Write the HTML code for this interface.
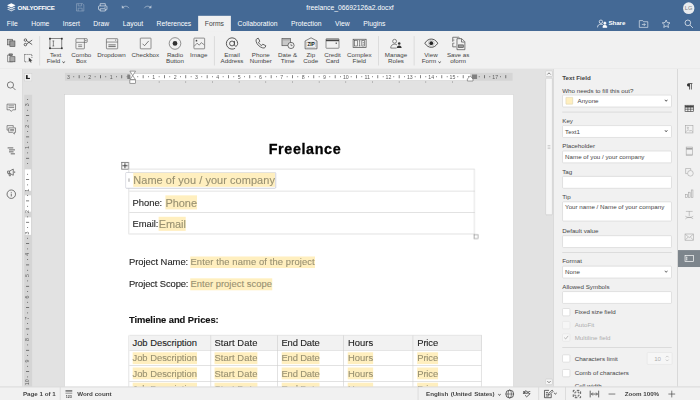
<!DOCTYPE html>
<html lang="en">
<head>
<meta charset="utf-8">
<title>freelance_06692126a2.docxf - ONLYOFFICE</title>
<style>
html,body{margin:0;padding:0;width:700px;height:400px;overflow:hidden;background:#e2e2e2}
#stage{position:absolute;left:0;top:0;width:1240px;height:709px;transform:scale(0.564516);transform-origin:0 0;font-family:"Liberation Sans",Arial,Helvetica,sans-serif;font-size:11px;color:#444;overflow:hidden;background:#e2e2e2}
#stage *{box-sizing:border-box}
.abs{position:absolute}
svg{display:block;overflow:visible}
/* header */
#header{position:absolute;left:0;top:0;width:1240px;height:54.5px;background:#446995;color:#fff}
#logo{position:absolute;left:12px;top:6px;height:16px;white-space:nowrap}
#logo span{position:absolute;left:19.200px;top:1.5px;font-weight:bold;font-size:11px;letter-spacing:-.42px;line-height:13px}
.qa{position:absolute;top:3px;width:20px;height:20px}
#doctitle{position:absolute;left:0;width:1240px;top:0;height:28px;line-height:27px;text-align:center;font-size:12px}
#avatar{position:absolute;left:1209.5px;top:4px;width:20.5px;height:20.5px;border-radius:50%;background:#e9ecef;color:#7b7f86;font-size:10px;line-height:20.5px;text-align:center}
#tabs{position:absolute;left:0;top:27.5px;height:27px;white-space:nowrap;font-size:0}
#tabs span{display:inline-block;height:27px;line-height:28px;padding:0 12px;font-size:12px;color:#fff;vertical-align:top}
#tabs span.act{background:#f1f1f1;color:#444}
.hbtn{position:absolute;top:31.5px;height:20px}
/* toolbar */
#toolbar{position:absolute;left:0;top:54.5px;width:1240px;height:68.5px;z-index:5;background:#f1f1f1;border-bottom:1px solid #cbcbcb}
.tsep{position:absolute;top:9px;width:1px;height:52px;background:#cbcbcb}
.big{position:absolute;top:0;width:0;height:66px}
.big svg{position:absolute;left:-14px;top:8.5px;width:28px;height:28px}
.big .cap{position:absolute;left:-40px;width:80px;top:37px;text-align:center;line-height:11px;font-size:11px;color:#444;white-space:nowrap}
.sm{position:absolute;width:20px;height:20px}
.car{display:inline-block;width:3.5px;height:3.5px;border-right:1px solid #444;border-bottom:1px solid #444;transform:rotate(45deg);margin-left:4px;position:relative;top:-1.5px}
/* left / right bars */
#left{position:absolute;left:0;top:122px;width:40px;height:563px;background:#f1f1f1;border-right:1px solid #cbcbcb}
#left svg{position:absolute;left:9.5px;width:20px;height:20px}
#rbar{position:absolute;left:1200px;top:122px;width:40px;height:563px;background:#f1f1f1;border-left:1px solid #cbcbcb}
#rbar svg{position:absolute;left:10px;width:20px;height:20px}
#rbar .on{position:absolute;left:0;top:320.5px;width:40px;height:30.5px;background:#7d858c}
/* right panel */
#panel{opacity:.99;position:absolute;left:980px;top:122px;width:220px;height:563px;background:#f1f1f1;border-left:1px solid #cbcbcb;overflow:hidden}
#panel .l{position:absolute;left:15px;line-height:13px;height:13px;white-space:nowrap;color:#444}
#panel .in{position:absolute;left:15px;width:194px;height:22px;background:#fff;border:1px solid #cfcfcf;border-radius:2px;line-height:20px;padding-left:4px;white-space:nowrap;color:#444;overflow:hidden}
#panel .sep{position:absolute;left:15px;width:194px;height:1px;background:#cbcbcb}
#panel .cb{position:absolute;left:15px;width:14px;height:14px;background:#fff;border:1px solid #cfcfcf;border-radius:2px}
#panel .cbl{position:absolute;left:37px;line-height:14px;height:14px;white-space:nowrap}
#panel .dis{opacity:.4}
#panel .dd{position:absolute;right:7.500px;top:6px;width:4px;height:4px;border-right:1.4px solid #444;border-bottom:1.4px solid #444;transform:rotate(45deg)}
/* status */
#status{position:absolute;left:0;top:684.5px;width:1240px;height:25px;background:#f1f1f1;border-top:1px solid #cbcbcb;font-weight:bold;color:#444}
#status .t{position:absolute;top:0;line-height:24px;white-space:nowrap}
#status .sw{position:absolute;left:0;top:0;width:1240px;height:24px;filter:grayscale(1)}
#status svg{position:absolute;top:2px;width:20px;height:20px}
#status .vs{position:absolute;top:0;width:1px;height:24px;background:#cbcbcb}
/* editor */
#editor{position:absolute;left:40px;top:122px;width:940px;height:563px;background:#e2e2e2;overflow:hidden}
#page{position:absolute;left:75px;top:46.5px;width:795px;height:600px;background:#fff;border:1px solid #bfbfbf}
#doc{font-family:"Liberation Sans",Arial,sans-serif;color:#222}
#doc .tx{position:absolute;white-space:nowrap;line-height:1;-webkit-text-stroke:.2px}
.pht{color:#989070}
#vscroll{position:absolute;left:926.5px;top:0;width:12px;height:563px}
</style>
</head>
<body>
<div id="stage">
<div id="header">
  <div id="logo">
    <svg width="16" height="17" viewBox="0 0 16 17" style="position:absolute;left:0;top:-1px">
      <path d="M8 .8 L15.5 4.5 L8 8.200 L.5 4.5 Z" fill="#fff"/>
      <path d="M.5 8 L2.800 6.900 L8 9.5 L13.200 6.900 L15.5 8 L8 11.700 Z" fill="#fff" opacity=".85"/>
      <path d="M.5 11.5 L2.800 10.400 L8 13 L13.200 10.400 L15.5 11.5 L8 15.200 Z" fill="#fff" opacity=".7"/>
    </svg>
    <span>ONLYOFFICE</span>
  </div>
  <svg class="qa" style="left:131.5px;opacity:.45" viewBox="0 0 20 20" fill="none" stroke="#fff" stroke-width="1"><path d="M3.5 3.5h11l2 2v11h-13z"/><path d="M6.5 3.5v4h6v-4M6.5 16.5v-5h7v5"/></svg>
  <svg class="qa" style="left:171.5px" viewBox="0 0 20 20" fill="none" stroke="#fff" stroke-width="1"><path d="M5.5 7.5v-4h9v4"/><rect x="2.5" y="7.5" width="15" height="7" rx="1.5"/><path d="M5.5 12.5h9v4h-9z" fill="#446995"/><path d="M13 10h2" /></svg>
  <svg class="qa" style="left:211.5px;opacity:.6" viewBox="0 0 20 20" fill="none" stroke="#fff" stroke-width="1.3"><path d="M5 10.500c3.500-3.500 8.500-3.500 11.500 1"/><path d="M3.800 6.500v5h5z" fill="#fff" stroke="none"/></svg>
  <svg class="qa" style="left:251.5px;opacity:.6" viewBox="0 0 20 20" fill="none" stroke="#fff" stroke-width="1.3"><path d="M15 10.500c-3.500-3.500-8.500-3.500-11.500 1"/><path d="M16.200 6.500v5h-5z" fill="#fff" stroke="none"/></svg>
  <div id="doctitle">freelance_06692126a2.docxf</div>
  <div id="avatar">LG</div>
  <div id="tabs"><span>File</span><span>Home</span><span>Insert</span><span>Draw</span><span>Layout</span><span>References</span><span class="act">Forms</span><span>Collaboration</span><span>Protection</span><span>View</span><span>Plugins</span></div>
  <svg class="hbtn" style="left:1056.5px;width:20px" viewBox="0 0 20 20" fill="none" stroke="#fff" stroke-width="1.2"><circle cx="7.5" cy="6.5" r="3"/><path d="M1.5 16.5c0-4 2.5-5.5 6-5.5s4 1 5 2.5"/><circle cx="14.5" cy="9" r="2" fill="#fff"/><path d="M11 16.5c0-2.5 1.5-4 3.5-4s3.5 1.5 3.5 4z" fill="#fff"/></svg>
  <div class="hbtn" style="left:1078px;line-height:19px;font-size:11px;font-weight:bold;color:#fff;letter-spacing:-.2px">Share</div>
  <svg class="hbtn" style="left:1130px;width:20px" viewBox="0 0 20 20" fill="none" stroke="#fff" stroke-width="1"><path d="M2.5 4.5h6l1.5 2h7.5v10h-15z"/><path d="M7 11.5h6M10.5 9l2.5 2.5-2.5 2.5"/></svg>
  <svg class="hbtn" style="left:1170px;width:20px" viewBox="0 0 20 20" fill="none" stroke="#fff" stroke-width="1.1"><path d="M10 3.500l2 4.500 4.800.5-3.600 3.300 1 4.800-4.200-2.500-4.200 2.500 1-4.800-3.600-3.300 4.800-.5z"/></svg>
  <svg class="hbtn" style="left:1210px;width:20px" viewBox="0 0 20 20" fill="none" stroke="#fff" stroke-width="1.2"><circle cx="8.5" cy="8.5" r="5"/><path d="M12.5 12.5l5 5"/></svg>
</div>
<div id="toolbar">
  <svg class="sm" style="left:10px;top:11px" viewBox="0 0 20 20" fill="none" stroke="#444" stroke-width="1"><rect x="3.5" y="3.5" width="9" height="10" fill="#bdbdbd"/><rect x="7.5" y="6.5" width="9" height="10" fill="#9a9a9a"/></svg>
  <svg class="sm" style="left:40px;top:10.5px" viewBox="0 0 20 20" fill="none" stroke="#333" stroke-width="1.3"><circle cx="5" cy="6" r="2.2"/><circle cx="5" cy="14" r="2.2"/><path d="M7 7l10 7M7 13l10-7"/></svg>
  <svg class="sm" style="left:10px;top:38px" viewBox="0 0 20 20" fill="none" stroke="#444" stroke-width="1"><path d="M6.5 4.5h-3v12h9v-3"/><rect x="6" y="2.5" width="6" height="3" fill="#888"/><rect x="7.5" y="7.5" width="9" height="9" fill="#aaa"/></svg>
  <svg class="sm" style="left:40px;top:38px" viewBox="0 0 20 20" fill="none" stroke="#333" stroke-width="1.2"><path d="M3.5 3.5h13v6M3.5 3.5v13h5" stroke-dasharray="2 1.5"/><path d="M11 9v8l2-2 1.500 3 1.500-.8-1.500-2.800h3z" fill="#444" stroke="none"/></svg>
  <div class="tsep" style="left:70px"></div>
  <div class="tsep" style="left:379px"></div>
  <div class="tsep" style="left:670px"></div>
  <div class="tsep" style="left:733px"></div>

  <div class="big" style="left:98.5px"><svg viewBox="0 0 28 28" fill="none" stroke="#444" stroke-width="1.1"><rect x="3.5" y="5.5" width="21" height="17"/><path d="M9.5 9.500v9M8 9.500h3M8 18.500h3"/><rect x="2" y="4" width="3" height="3" fill="#333" stroke="none"/><rect x="23" y="4" width="3" height="3" fill="#333" stroke="none"/><rect x="2" y="21" width="3" height="3" fill="#333" stroke="none"/><rect x="23" y="21" width="3" height="3" fill="#333" stroke="none"/></svg><div class="cap">Text<br>Field<i class="car"></i></div></div>
  <div class="big" style="left:144px"><svg viewBox="0 0 28 28" fill="none" stroke="#444" stroke-width="1"><rect x="4.5" y="5.5" width="20" height="6.5" rx="1"/><path d="M19.500 5.500v6.500"/><path d="M20.700 8h2.800l-1.400 1.800z" fill="#444" stroke="none"/><path d="M4.500 12v10.500a1 1 0 0 0 1 1h13a1 1 0 0 0 1-1v-10.500"/><path d="M8.500 16.500h7M8.500 19.500h7"/></svg><div class="cap">Combo<br>Box</div></div>
  <div class="big" style="left:197.5px"><svg viewBox="0 0 28 28" fill="none" stroke="#444" stroke-width="1"><rect x="4.5" y="5.5" width="20" height="18" rx="1"/><path d="M4.500 11.500h20"/><path d="M19.600 7.500h2.800l-1.400 1.800z" fill="#444" stroke="none"/><path d="M8 16.500h13M8 19.500h13" stroke-width="1.300"/></svg><div class="cap">Dropdown</div></div>
  <div class="big" style="left:258.2px"><svg viewBox="0 0 28 28" fill="none" stroke="#444" stroke-width="1"><rect x="4.5" y="4.500" width="19" height="19" rx="1"/><path d="M8.500 14.500l3.500 3.500 7.500-8.500" stroke-width="1.200"/></svg><div class="cap" style="left:-40.700px">Checkbox</div></div>
  <div class="big" style="left:310px"><svg viewBox="0 0 28 28" fill="none" stroke="#444" stroke-width="1"><circle cx="14" cy="14" r="10.300"/><circle cx="14" cy="14" r="4.200" fill="#333" stroke="none"/></svg><div class="cap">Radio<br>Button</div></div>
  <div class="big" style="left:352.5px"><svg viewBox="0 0 28 28" fill="none" stroke="#444" stroke-width="1"><rect x="4.5" y="4.500" width="19" height="19" rx="1"/><circle cx="9" cy="9" r="1.500" fill="#444" stroke="none"/><path d="M5 19l5-5.500 4 3.500 3.500-4.500 5.500 4"/></svg><div class="cap" style="left:-40.500px">Image</div></div>

  <div class="big" style="left:411px"><svg viewBox="0 0 28 28" fill="none" stroke="#3c3c3c" stroke-width="1.5"><circle cx="14" cy="14" r="4.300"/><path d="M18.300 9.500v6.500c0 1.800 1 2.800 2.400 2.800s3.300-1.500 3.300-4.800c0-5.500-4.500-10-10-10s-10 4.500-10 10 4.500 10 10 10c2 0 4-.5 5.500-1.500"/></svg><div class="cap">Email<br>Address</div></div>
  <div class="big" style="left:462px"><svg viewBox="0 0 28 28" fill="none" stroke="#3c3c3c" stroke-width="1.600"><g transform="translate(14 14) scale(.88) translate(-14.500 -14)"><path d="M6.500 4.500l3-1 3 6-2.500 2c1 3 3.500 5.500 6.500 6.500l2-2.500 6 3-1 3c-1 1.500-3 2-5 1.500c-7-2-12-7-13.500-13.500c-.5-2 0-4 1.500-5z"/></g></svg><div class="cap">Phone<br>Number</div></div>
  <div class="big" style="left:509.5px"><svg viewBox="0 0 28 28" fill="none" stroke="#444" stroke-width="1.100"><rect x="3.500" y="5.500" width="15" height="12.500" fill="#c9c9c9"/><path d="M4 7.500h14" stroke-width="1.500" stroke="#999"/><circle cx="19.500" cy="17.500" r="5.500" fill="#f1f1f1" stroke-width="1.300"/><path d="M19.500 14.500v3.300h2.700"/></svg><div class="cap">Date &amp;<br>Time</div></div>
  <div class="big" style="left:550.5px"><svg viewBox="0 0 28 28" fill="none" stroke="#444" stroke-width="1.200"><path d="M3.500 9.500l10.500-5.500 10.500 5.500v14h-21z"/><rect x="6" y="11.500" width="16" height="9" stroke-width=".5" stroke="#888"/><text x="14" y="19.200" font-family="Liberation Sans,Arial,sans-serif" font-size="8.500" font-weight="bold" text-anchor="middle" fill="#222" stroke="none" letter-spacing="-.3">ZIP</text></svg><div class="cap">Zip<br>Code</div></div>
  <div class="big" style="left:589px"><svg viewBox="0 0 28 28" fill="none" stroke="#444" stroke-width="1"><rect x="2.500" y="5.500" width="23" height="17" rx="1"/><path d="M2.500 8.500h23" stroke-width="3"/><path d="M19.500 13.500h2.500" stroke-width="2"/></svg><div class="cap">Credit<br>Card</div></div>
  <div class="big" style="left:636.5px"><svg viewBox="0 0 28 28" fill="none" stroke="#444" stroke-width="1.200"><rect x="2.500" y="6.500" width="23" height="14.500"/><rect x="5" y="9" width="5" height="9.500" stroke-width="1"/><rect x="18" y="9" width="5" height="9.500" stroke-width="1"/><path d="M14 9v9.500M12.500 9h3M12.500 18.500h3" stroke-width="1"/><path d="M20.500 11.500v1.500M20.500 14.500v1.500"/></svg><div class="cap">Complex<br>Field</div></div>
  <div class="big" style="left:701.5px"><svg viewBox="0 0 28 28" fill="none" stroke="#444" stroke-width="1.300"><g transform="translate(14 14) scale(.86) translate(-14 -13)"><circle cx="10.500" cy="8.500" r="4"/><path d="M2.500 22.500c0-5.500 3.500-8 8-8 2 0 3.500.5 5 1.500"/><circle cx="20" cy="13" r="2.700" fill="#333" stroke="none"/><path d="M15 22.500c0-3.500 2-5.500 5-5.500s5 2 5 5.500z" fill="#333" stroke="none"/><path d="M2.500 22.500h12"/></g></svg><div class="cap">Manage<br>Roles</div></div>
  <div class="big" style="left:763.5px"><svg viewBox="0 0 28 28" fill="none" stroke="#3a3a3a" stroke-width="1.5"><path d="M2.500 13.500C6 8 10 6.200 14 6.200S22 8 25.500 13.500C22 19 18 20.800 14 20.800S6 19 2.500 13.500z"/><circle cx="14" cy="13.500" r="5.200" stroke-width=".7" stroke="#888"/><circle cx="14" cy="13.500" r="3.300" fill="#222" stroke="none"/></svg><div class="cap">View<br>Form<i class="car"></i></div></div>
  <div class="big" style="left:811.5px"><svg viewBox="0 0 28 28" fill="none" stroke="#444" stroke-width="1.200"><path d="M10 20h-6v-6.500M4 11v-8h10.500l3 3" /><path d="M7 8h-3M7 13.500h-3" stroke-width="1"/><path d="M11.500 5.500h8.500l5.500 5.500v14h-14z" fill="#f1f1f1"/><path d="M19.500 6v5.500h5.500"/><rect x="14" y="16.500" width="9" height="5" fill="#999" stroke-width="1"/></svg><div class="cap">Save as<br>oform</div></div>
</div>
<div id="left">
  <svg style="top:20px" viewBox="0 0 20 20" fill="none" stroke="#444" stroke-width="1.200"><circle cx="8.5" cy="8.5" r="5.5"/><path d="M12.5 12.5l5 5"/></svg>
  <svg style="top:58.5px" viewBox="0 0 20 20" fill="none" stroke="#444" stroke-width="1"><path d="M2.5 3.5h15v10h-5l-2.5 3-2.5-3h-5z"/><path d="M5 6.5h10M5 9.5h10" /></svg>
  <svg style="top:98px" viewBox="0 0 20 20" fill="none" stroke="#444" stroke-width="1"><path d="M2.5 2.5h11v3M2.5 2.5v8h3"/><path d="M5.5 6.5h12v8h-2v3l-3-3h-7z"/><path d="M8 9.5h7M8 11.5h7"/></svg>
  <svg style="top:134.5px" viewBox="0 0 20 20" fill="none" stroke="#444" stroke-width="1.4"><path d="M3.5 5h10M6 8.5h10.500M6 12h8M9 15.500h7.500"/></svg>
  <svg style="top:172.5px" viewBox="0 0 20 20" fill="none" stroke="#444" stroke-width="1.2"><path d="M3.500 8h3.500l6.500-3.500v11l-6.500-3.500h-3.500z"/><path d="M5.500 12l1 4.500h2l-1-4.500M16 8.500v3"/><path d="M7 8v4"/></svg>
  <svg style="top:212px" viewBox="0 0 20 20" fill="none" stroke="#444" stroke-width="1.3"><circle cx="10" cy="10" r="7.5"/><path d="M10 9v5M10 6v1.5"/></svg>
</div>
<div id="editor"><div class="abs" id="ed0" style="left:-40px;top:-122px;width:1240px;height:709px">
<div class="abs" style="left:114px;top:167px;width:796px;height:553px;background:#fff;border:1px solid #cdcdcd"></div>
<div id="doc" style="opacity:.99"><div class="tx " style="left:476.07px;top:251.51px;font-size:25.38px;letter-spacing:1.1px;font-weight:bold;color:#000;-webkit-text-stroke:.55px #000;">Freelance</div>
<div class="abs" style="left:228.51px;top:299.4px;width:612.03px;height:1px;background:#cccccc"></div>
<div class="abs" style="left:228.51px;top:338.29px;width:612.03px;height:1px;background:#cccccc"></div>
<div class="abs" style="left:228.51px;top:376.11px;width:612.03px;height:1px;background:#cccccc"></div>
<div class="abs" style="left:228.51px;top:414.46px;width:612.03px;height:1px;background:#cccccc"></div>
<div class="abs" style="left:228.01px;top:299.9px;width:1px;height:115.05px;background:#cccccc"></div>
<div class="abs" style="left:840.04px;top:299.9px;width:1px;height:115.05px;background:#cccccc"></div>
<svg class="abs" style="left:214.87px;top:286.79px" width="13" height="13" viewBox="0 0 13 13" fill="#fff" stroke="#555" stroke-width="1.2"><rect x=".5" y=".5" width="12" height="12"/><path d="M6.500 2v9M2 6.500h9" stroke-width="2" stroke="#444"/></svg>
<div class="abs" style="left:839.3px;top:415.22px;width:7.44px;height:7.44px;background:#fff;border:1px solid #777"></div>
<div class="abs" style="left:222.31px;top:305.39px;width:266.78px;height:29.05px;background:#fff;border:1px solid #adb1bf;border-radius:2px"></div>
<div class="abs" style="left:227.27px;top:315.67px;width:2.83px;height:5.85px;background:#c8c8c8"></div>
<div class="abs" style="left:236.13px;top:306.11px;width:251.01px;height:25.07px;background:#ffefbf"></div><div class="tx pht" style="left:236.13px;top:309.82px;font-size:19.42px;letter-spacing:0.11px;">Name of you / your company</div>
<div class="tx " style="left:234.89px;top:352.26px;font-size:16.64px;letter-spacing:-0.05px;">Phone:</div>
<div class="abs" style="left:293.17px;top:346.21px;width:55.8px;height:25.07px;background:#ffefbf"></div><div class="tx pht" style="left:293.17px;top:349.91px;font-size:19.42px;letter-spacing:-0.07px;">Phone</div>
<div class="tx " style="left:234.89px;top:390.35px;font-size:16.64px;letter-spacing:-0.12px;">Email:</div>
<div class="abs" style="left:281.21px;top:384.29px;width:47.83px;height:25.07px;background:#ffefbf"></div><div class="tx pht" style="left:281.21px;top:388px;font-size:19.42px;letter-spacing:-0.14px;">Email</div>
<div class="tx " style="left:228.34px;top:457.13px;font-size:16.64px;letter-spacing:-0.02px;">Project Name:</div>
<div class="abs" style="left:337.46px;top:453.93px;width:220.54px;height:21.43px;background:#ffefbf"></div><div class="tx pht" style="left:337.46px;top:457.13px;font-size:16.64px;letter-spacing:0.2px;">Enter the name of the project</div>
<div class="tx " style="left:228.34px;top:496.1px;font-size:16.64px;letter-spacing:-0.2px;">Project Scope:</div>
<div class="abs" style="left:337.46px;top:492.9px;width:144.37px;height:21.43px;background:#ffefbf"></div><div class="tx pht" style="left:337.46px;top:496.1px;font-size:16.64px;letter-spacing:0.05px;">Enter project scope</div>
<div class="tx " style="left:228.34px;top:558.99px;font-size:16.64px;letter-spacing:-0.12px;font-weight:bold;color:#111;-webkit-text-stroke:.25px #111;">Timeline and Prices:</div>
<div class="abs" style="left:228.51px;top:593.87px;width:624.43px;height:27.01px;background:#f2f2f2"></div>
<div class="abs" style="left:228.51px;top:593.37px;width:624.43px;height:1px;background:#cccccc"></div>
<div class="abs" style="left:228.51px;top:620.39px;width:624.43px;height:1px;background:#cccccc"></div>
<div class="abs" style="left:228.51px;top:647.4px;width:624.43px;height:1px;background:#cccccc"></div>
<div class="abs" style="left:228.51px;top:675.12px;width:624.43px;height:1px;background:#cccccc"></div>
<div class="abs" style="left:228.51px;top:702.76px;width:624.43px;height:1px;background:#cccccc"></div>
<div class="abs" style="left:228.01px;top:593.87px;width:1px;height:109.39px;background:#cccccc"></div>
<div class="abs" style="left:373.09px;top:593.87px;width:1px;height:109.39px;background:#cccccc"></div>
<div class="abs" style="left:491.07px;top:593.87px;width:1px;height:109.39px;background:#cccccc"></div>
<div class="abs" style="left:607.81px;top:593.87px;width:1px;height:109.39px;background:#cccccc"></div>
<div class="abs" style="left:730.57px;top:593.87px;width:1px;height:109.39px;background:#cccccc"></div>
<div class="abs" style="left:852.44px;top:593.87px;width:1px;height:109.39px;background:#cccccc"></div>
<div class="tx " style="left:234.71px;top:600.17px;font-size:16.64px;letter-spacing:-0.03px;">Job Description</div>
<div class="tx " style="left:379.97px;top:600.17px;font-size:16.64px;letter-spacing:0.13px;">Start Date</div>
<div class="tx " style="left:498.66px;top:600.17px;font-size:16.64px;letter-spacing:-0.26px;">End Date</div>
<div class="tx " style="left:616.46px;top:600.17px;font-size:16.64px;letter-spacing:0.07px;">Hours</div>
<div class="tx " style="left:739.13px;top:600.17px;font-size:16.64px;letter-spacing:-0.23px;">Price</div>
<div class="abs" style="left:234.71px;top:623.99px;width:114.26px;height:21.43px;background:#ffefbf"></div><div class="tx pht" style="left:234.71px;top:627.19px;font-size:16.64px;letter-spacing:-0.03px;">Job Description</div>
<div class="abs" style="left:379.97px;top:623.99px;width:76.17px;height:21.43px;background:#ffefbf"></div><div class="tx pht" style="left:379.97px;top:627.19px;font-size:16.64px;letter-spacing:0.13px;">Start Date</div>
<div class="abs" style="left:498.66px;top:623.99px;width:67.31px;height:21.43px;background:#ffefbf"></div><div class="tx pht" style="left:498.66px;top:627.19px;font-size:16.64px;letter-spacing:-0.26px;">End Date</div>
<div class="abs" style="left:616.46px;top:623.99px;width:44.73px;height:21.43px;background:#ffefbf"></div><div class="tx pht" style="left:616.46px;top:627.19px;font-size:16.64px;letter-spacing:0.07px;">Hours</div>
<div class="abs" style="left:739.13px;top:623.99px;width:36.76px;height:21.43px;background:#ffefbf"></div><div class="tx pht" style="left:739.13px;top:627.19px;font-size:16.64px;letter-spacing:-0.23px;">Price</div>
<div class="abs" style="left:234.71px;top:651px;width:114.26px;height:21.43px;background:#ffefbf"></div><div class="tx pht" style="left:234.71px;top:654.2px;font-size:16.64px;letter-spacing:-0.03px;">Job Description</div>
<div class="abs" style="left:379.97px;top:651px;width:76.17px;height:21.43px;background:#ffefbf"></div><div class="tx pht" style="left:379.97px;top:654.2px;font-size:16.64px;letter-spacing:0.13px;">Start Date</div>
<div class="abs" style="left:498.66px;top:651px;width:67.31px;height:21.43px;background:#ffefbf"></div><div class="tx pht" style="left:498.66px;top:654.2px;font-size:16.64px;letter-spacing:-0.26px;">End Date</div>
<div class="abs" style="left:616.46px;top:651px;width:44.73px;height:21.43px;background:#ffefbf"></div><div class="tx pht" style="left:616.46px;top:654.2px;font-size:16.64px;letter-spacing:0.07px;">Hours</div>
<div class="abs" style="left:739.13px;top:651px;width:36.76px;height:21.43px;background:#ffefbf"></div><div class="tx pht" style="left:739.13px;top:654.2px;font-size:16.64px;letter-spacing:-0.23px;">Price</div>
<div class="abs" style="left:234.71px;top:678.19px;width:114.26px;height:21.43px;background:#ffefbf"></div><div class="tx pht" style="left:234.71px;top:681.39px;font-size:16.64px;letter-spacing:-0.03px;">Job Description</div>
<div class="abs" style="left:379.97px;top:678.19px;width:76.17px;height:21.43px;background:#ffefbf"></div><div class="tx pht" style="left:379.97px;top:681.39px;font-size:16.64px;letter-spacing:0.13px;">Start Date</div>
<div class="abs" style="left:498.66px;top:678.19px;width:67.31px;height:21.43px;background:#ffefbf"></div><div class="tx pht" style="left:498.66px;top:681.39px;font-size:16.64px;letter-spacing:-0.26px;">End Date</div>
<div class="abs" style="left:616.46px;top:678.19px;width:44.73px;height:21.43px;background:#ffefbf"></div><div class="tx pht" style="left:616.46px;top:681.39px;font-size:16.64px;letter-spacing:0.07px;">Hours</div>
<div class="abs" style="left:739.13px;top:678.19px;width:36.76px;height:21.43px;background:#ffefbf"></div><div class="tx pht" style="left:739.13px;top:681.39px;font-size:16.64px;letter-spacing:-0.23px;">Price</div></div>
<div class="abs" style="left:115.14px;top:128.96px;width:792.89px;height:13.82px;background:#d5d5d5"></div>
<div class="abs" style="left:228.51px;top:130.55px;width:604.77px;height:11.34px;background:#fff"></div>
<div class="abs" style="left:43.05px;top:168.29px;width:13.46px;height:540.71px;background:#d5d5d5"></div>
<div class="abs" style="left:44.11px;top:299.9px;width:10.98px;height:38.26px;background:#fff"></div>
<div class="abs" style="left:44.11px;top:346.14px;width:10.98px;height:29.23px;background:#fff"></div>
<div class="abs" style="left:44.11px;top:384.58px;width:10.98px;height:31px;background:#fff"></div>
<div class="abs" style="left:42.87px;top:129.67px;width:13.82px;height:14.53px;background:#f1f1f1;border:1px solid #cfcfcf"></div>
<div class="abs" style="left:45.88px;top:133.21px;width:2.66px;height:7.26px;background:#222"></div>
<div class="abs" style="left:45.88px;top:137.82px;width:7.62px;height:2.66px;background:#222"></div>
<svg class="abs" style="left:0;top:0;opacity:.99" width="1240" height="709" viewBox="0 0 1240 709" font-family="Liberation Sans,Arial,sans-serif" font-size="9.300" fill="#5c5c5c" text-anchor="middle">
<text x="121.24" y="139.17">3</text>
<rect x="130.09" y="134.97" width="1.200" height="1.800" fill="#444"/>
<rect x="139.54" y="133.12" width="1.200" height="5.500" fill="#444"/>
<rect x="148.99" y="134.97" width="1.200" height="1.800" fill="#444"/>
<text x="159.04" y="139.17">2</text>
<rect x="167.88" y="134.97" width="1.200" height="1.800" fill="#444"/>
<rect x="177.33" y="133.12" width="1.200" height="5.500" fill="#444"/>
<rect x="186.78" y="134.97" width="1.200" height="1.800" fill="#444"/>
<text x="196.83" y="139.17">1</text>
<rect x="205.68" y="134.97" width="1.200" height="1.800" fill="#444"/>
<rect x="215.13" y="133.12" width="1.200" height="5.500" fill="#444"/>
<rect x="224.58" y="134.97" width="1.200" height="1.800" fill="#444"/>
<rect x="243.47" y="134.97" width="1.200" height="1.800" fill="#444"/>
<rect x="252.92" y="133.12" width="1.200" height="5.500" fill="#444"/>
<rect x="262.37" y="134.97" width="1.200" height="1.800" fill="#444"/>
<text x="272.42" y="139.17">1</text>
<rect x="281.27" y="134.97" width="1.200" height="1.800" fill="#444"/>
<rect x="290.72" y="133.12" width="1.200" height="5.500" fill="#444"/>
<rect x="300.17" y="134.97" width="1.200" height="1.800" fill="#444"/>
<text x="310.22" y="139.17">2</text>
<rect x="319.06" y="134.97" width="1.200" height="1.800" fill="#444"/>
<rect x="328.51" y="133.12" width="1.200" height="5.500" fill="#444"/>
<rect x="337.96" y="134.97" width="1.200" height="1.800" fill="#444"/>
<text x="348.01" y="139.17">3</text>
<rect x="356.86" y="134.97" width="1.200" height="1.800" fill="#444"/>
<rect x="366.31" y="133.12" width="1.200" height="5.500" fill="#444"/>
<rect x="375.76" y="134.97" width="1.200" height="1.800" fill="#444"/>
<text x="385.81" y="139.17">4</text>
<rect x="394.65" y="134.97" width="1.200" height="1.800" fill="#444"/>
<rect x="404.1" y="133.12" width="1.200" height="5.500" fill="#444"/>
<rect x="413.55" y="134.97" width="1.200" height="1.800" fill="#444"/>
<text x="423.6" y="139.17">5</text>
<rect x="432.45" y="134.97" width="1.200" height="1.800" fill="#444"/>
<rect x="441.9" y="133.12" width="1.200" height="5.500" fill="#444"/>
<rect x="451.35" y="134.97" width="1.200" height="1.800" fill="#444"/>
<text x="461.4" y="139.17">6</text>
<rect x="470.24" y="134.97" width="1.200" height="1.800" fill="#444"/>
<rect x="479.69" y="133.12" width="1.200" height="5.500" fill="#444"/>
<rect x="489.14" y="134.97" width="1.200" height="1.800" fill="#444"/>
<text x="499.19" y="139.17">7</text>
<rect x="508.04" y="134.97" width="1.200" height="1.800" fill="#444"/>
<rect x="517.49" y="133.12" width="1.200" height="5.500" fill="#444"/>
<rect x="526.94" y="134.97" width="1.200" height="1.800" fill="#444"/>
<text x="536.99" y="139.17">8</text>
<rect x="545.83" y="134.97" width="1.200" height="1.800" fill="#444"/>
<rect x="555.28" y="133.12" width="1.200" height="5.500" fill="#444"/>
<rect x="564.73" y="134.97" width="1.200" height="1.800" fill="#444"/>
<text x="574.78" y="139.17">9</text>
<rect x="583.63" y="134.97" width="1.200" height="1.800" fill="#444"/>
<rect x="593.08" y="133.12" width="1.200" height="5.500" fill="#444"/>
<rect x="602.53" y="134.97" width="1.200" height="1.800" fill="#444"/>
<text x="612.58" y="139.17">10</text>
<rect x="621.42" y="134.97" width="1.200" height="1.800" fill="#444"/>
<rect x="630.87" y="133.12" width="1.200" height="5.500" fill="#444"/>
<rect x="640.32" y="134.97" width="1.200" height="1.800" fill="#444"/>
<text x="650.37" y="139.17">11</text>
<rect x="659.22" y="134.97" width="1.200" height="1.800" fill="#444"/>
<rect x="668.67" y="133.12" width="1.200" height="5.500" fill="#444"/>
<rect x="678.12" y="134.97" width="1.200" height="1.800" fill="#444"/>
<text x="688.17" y="139.17">12</text>
<rect x="697.01" y="134.97" width="1.200" height="1.800" fill="#444"/>
<rect x="706.46" y="133.12" width="1.200" height="5.500" fill="#444"/>
<rect x="715.91" y="134.97" width="1.200" height="1.800" fill="#444"/>
<text x="725.96" y="139.17">13</text>
<rect x="734.81" y="134.97" width="1.200" height="1.800" fill="#444"/>
<rect x="744.26" y="133.12" width="1.200" height="5.500" fill="#444"/>
<rect x="753.71" y="134.97" width="1.200" height="1.800" fill="#444"/>
<text x="763.76" y="139.17">14</text>
<rect x="772.6" y="134.97" width="1.200" height="1.800" fill="#444"/>
<rect x="782.05" y="133.12" width="1.200" height="5.500" fill="#444"/>
<rect x="791.5" y="134.97" width="1.200" height="1.800" fill="#444"/>
<text x="801.55" y="139.17">15</text>
<rect x="810.4" y="134.97" width="1.200" height="1.800" fill="#444"/>
<rect x="819.85" y="133.12" width="1.200" height="5.500" fill="#444"/>
<rect x="829.3" y="134.97" width="1.200" height="1.800" fill="#444"/>
<rect x="848.19" y="134.97" width="1.200" height="1.800" fill="#444"/>
<rect x="857.64" y="133.12" width="1.200" height="5.500" fill="#444"/>
<rect x="867.09" y="134.97" width="1.200" height="1.800" fill="#444"/>
<text x="877.14" y="139.17">17</text>
<rect x="885.99" y="134.97" width="1.200" height="1.800" fill="#444"/>
<rect x="895.44" y="133.12" width="1.200" height="5.500" fill="#444"/>
<rect x="281.37" y="143.78" width="1" height="3" fill="#888"/>
<rect x="328.61" y="143.78" width="1" height="3" fill="#888"/>
<rect x="375.86" y="143.78" width="1" height="3" fill="#888"/>
<rect x="423.1" y="143.78" width="1" height="3" fill="#888"/>
<rect x="470.34" y="143.78" width="1" height="3" fill="#888"/>
<rect x="517.59" y="143.78" width="1" height="3" fill="#888"/>
<rect x="564.83" y="143.78" width="1" height="3" fill="#888"/>
<rect x="612.08" y="143.78" width="1" height="3" fill="#888"/>
<rect x="659.32" y="143.78" width="1" height="3" fill="#888"/>
<rect x="706.56" y="143.78" width="1" height="3" fill="#888"/>
<rect x="753.81" y="143.78" width="1" height="3" fill="#888"/>
<rect x="801.05" y="143.78" width="1" height="3" fill="#888"/>
<rect x="47.9" y="175.76" width="1.800" height="1.200" fill="#444"/>
<text x="48.8" y="189.11" transform="rotate(-90 48.8 185.81)">3</text>
<rect x="47.9" y="194.66" width="1.800" height="1.200" fill="#444"/>
<rect x="46.05" y="204.11" width="5.500" height="1.200" fill="#444"/>
<rect x="47.9" y="213.56" width="1.800" height="1.200" fill="#444"/>
<text x="48.8" y="226.9" transform="rotate(-90 48.8 223.6)">2</text>
<rect x="47.9" y="232.45" width="1.800" height="1.200" fill="#444"/>
<rect x="46.05" y="241.9" width="5.500" height="1.200" fill="#444"/>
<rect x="47.9" y="251.35" width="1.800" height="1.200" fill="#444"/>
<text x="48.8" y="264.7" transform="rotate(-90 48.8 261.4)">1</text>
<rect x="47.9" y="270.25" width="1.800" height="1.200" fill="#444"/>
<rect x="46.05" y="279.7" width="5.500" height="1.200" fill="#444"/>
<rect x="47.9" y="289.15" width="1.800" height="1.200" fill="#444"/>
<rect x="47.9" y="308.04" width="1.800" height="1.200" fill="#444"/>
<rect x="46.05" y="317.49" width="5.500" height="1.200" fill="#444"/>
<rect x="47.9" y="326.94" width="1.800" height="1.200" fill="#444"/>
<text x="48.8" y="340.29" transform="rotate(-90 48.8 336.99)">1</text>
<rect x="47.9" y="345.84" width="1.800" height="1.200" fill="#444"/>
<rect x="46.05" y="355.29" width="5.500" height="1.200" fill="#444"/>
<rect x="47.9" y="364.74" width="1.800" height="1.200" fill="#444"/>
<text x="48.8" y="378.08" transform="rotate(-90 48.8 374.78)">2</text>
<rect x="47.9" y="383.63" width="1.800" height="1.200" fill="#444"/>
<rect x="46.05" y="393.08" width="5.500" height="1.200" fill="#444"/>
<rect x="47.9" y="402.53" width="1.800" height="1.200" fill="#444"/>
<text x="48.8" y="415.88" transform="rotate(-90 48.8 412.58)">3</text>
<rect x="47.9" y="421.43" width="1.800" height="1.200" fill="#444"/>
<rect x="46.05" y="430.88" width="5.500" height="1.200" fill="#444"/>
<rect x="47.9" y="440.33" width="1.800" height="1.200" fill="#444"/>
<text x="48.8" y="453.67" transform="rotate(-90 48.8 450.37)">4</text>
<rect x="47.9" y="459.22" width="1.800" height="1.200" fill="#444"/>
<rect x="46.05" y="468.67" width="5.500" height="1.200" fill="#444"/>
<rect x="47.9" y="478.12" width="1.800" height="1.200" fill="#444"/>
<text x="48.8" y="491.47" transform="rotate(-90 48.8 488.17)">5</text>
<rect x="47.9" y="497.02" width="1.800" height="1.200" fill="#444"/>
<rect x="46.05" y="506.47" width="5.500" height="1.200" fill="#444"/>
<rect x="47.9" y="515.92" width="1.800" height="1.200" fill="#444"/>
<text x="48.8" y="529.26" transform="rotate(-90 48.8 525.96)">6</text>
<rect x="47.9" y="534.81" width="1.800" height="1.200" fill="#444"/>
<rect x="46.05" y="544.26" width="5.500" height="1.200" fill="#444"/>
<rect x="47.9" y="553.71" width="1.800" height="1.200" fill="#444"/>
<text x="48.8" y="567.06" transform="rotate(-90 48.8 563.76)">7</text>
<rect x="47.9" y="572.61" width="1.800" height="1.200" fill="#444"/>
<rect x="46.05" y="582.06" width="5.500" height="1.200" fill="#444"/>
<rect x="47.9" y="591.51" width="1.800" height="1.200" fill="#444"/>
<text x="48.8" y="604.85" transform="rotate(-90 48.8 601.55)">8</text>
<rect x="47.9" y="610.4" width="1.800" height="1.200" fill="#444"/>
<rect x="46.05" y="619.85" width="5.500" height="1.200" fill="#444"/>
<rect x="47.9" y="629.3" width="1.800" height="1.200" fill="#444"/>
<text x="48.8" y="642.65" transform="rotate(-90 48.8 639.35)">9</text>
<rect x="47.9" y="648.2" width="1.800" height="1.200" fill="#444"/>
<rect x="46.05" y="657.65" width="5.500" height="1.200" fill="#444"/>
<rect x="47.9" y="667.1" width="1.800" height="1.200" fill="#444"/>
<text x="48.8" y="680.44" transform="rotate(-90 48.8 677.14)">10</text>
<rect x="47.9" y="685.99" width="1.800" height="1.200" fill="#444"/>
<rect x="225.5" y="131.96" width="5.500" height="8" fill="#808080"/>
<path d="M230.07 126 h10 l-5 8 l5 7 h-10 l5 -7 z" fill="#fff" stroke="#666" stroke-width="1.1"/>
<rect x="230.07" y="141.500" width="10" height="6" fill="#fff" stroke="#666" stroke-width="1.1"/>
<path d="M827.93 143.500 h10 v-3.500 l-5 -5.500 l-5 5.500 z" fill="#fff" stroke="#666" stroke-width="1.1"/>
<rect x="836.11" y="131.96" width="9" height="8" fill="#808080"/>
</svg>
<div class="abs" style="left:966px;top:125px;width:13px;height:11px;background:#f6f6f6;border:1px solid #c4c4c4;border-radius:2px"></div>
<div class="abs" style="left:966px;top:671px;width:13px;height:11px;background:#f6f6f6;border:1px solid #c4c4c4;border-radius:2px"></div>
<div class="abs" style="left:966px;top:138px;width:13px;height:243px;background:#f6f6f6;border:1px solid #c4c4c4;border-radius:2px"></div>
<svg class="abs" style="left:966px;top:125px" width="13" height="11" viewBox="0 0 13 11" fill="none" stroke="#555" stroke-width="1.3"><path d="M3.500 7l3-3 3 3"/></svg>
<svg class="abs" style="left:966px;top:671px" width="13" height="11" viewBox="0 0 13 11" fill="none" stroke="#555" stroke-width="1.3"><path d="M3.500 4l3 3 3-3"/></svg>
<div class="abs" style="left:970px;top:257px;width:5px;height:1px;background:#b5b5b5"></div>
<div class="abs" style="left:970px;top:260px;width:5px;height:1px;background:#b5b5b5"></div>
<div class="abs" style="left:970px;top:263px;width:5px;height:1px;background:#b5b5b5"></div>
</div></div>
<div id="panel">
  <div class="l" style="top:9px;font-weight:bold">Text Field</div>
  <div class="l" style="top:32px">Who needs to fill this out?</div>
  <div class="in" style="top:46px;padding-left:26px;line-height:18px"><i class="abs" style="left:5px;top:3px;width:13px;height:13px;background:#ffefbf;border:1px solid #dcd3b0;border-radius:1px"></i>Anyone<i class="dd"></i></div>
  <div class="sep" style="top:76px"></div>
  <div class="l" style="top:86px">Key</div>
  <div class="in" style="top:100px">Text1<i class="dd"></i></div>
  <div class="l" style="top:131px">Placeholder</div>
  <div class="in" style="top:145px;line-height:19px">Name of you / your company</div>
  <div class="l" style="top:176px">Tag</div>
  <div class="in" style="top:190px"></div>
  <div class="l" style="top:221px">Tip</div>
  <div class="in" style="top:235px;height:35px;line-height:14px;padding-top:1px">Your name / Name of your company</div>
  <div class="l" style="top:280px">Default value</div>
  <div class="in" style="top:295px"></div>
  <div class="sep" style="top:325px"></div>
  <div class="l" style="top:334px">Format</div>
  <div class="in" style="top:348.5px">None<i class="dd"></i></div>
  <div class="l" style="top:379.5px">Allowed Symbols</div>
  <div class="in" style="top:394px"></div>
  <div class="cb" style="top:423.5px"></div><div class="cbl" style="top:423.5px">Fixed size field</div>
  <div class="cb dis" style="top:446.5px"></div><div class="cbl dis" style="top:446.5px">AutoFit</div>
  <div class="cb dis" style="top:469px"><svg viewBox="0 0 12 12" width="12" height="12" fill="none" stroke="#444" stroke-width="1.500"><path d="M2.500 6l2.500 2.500 4.500-5.500"/></svg></div><div class="cbl dis" style="top:469px">Multiline field</div>
  <div class="sep" style="top:493px"></div>
  <div class="cb" style="top:505.5px"></div><div class="cbl" style="top:505.5px">Characters limit</div>
  <div class="in dis" style="top:501.5px;left:164.5px;width:45.5px;text-align:right;padding-right:19px;padding-left:0">10<svg class="abs" style="right:4px;top:3px" width="8" height="14" viewBox="0 0 8 14" fill="none" stroke="#444" stroke-width="1"><path d="M1.500 5l2.500-2.500 2.500 2.500M1.500 9l2.500 2.500 2.500-2.500"/></svg></div>
  <div class="cb" style="top:531.5px"></div><div class="cbl" style="top:531.5px">Comb of characters</div>
  <div class="cbl" style="top:554px">Cell width</div>
</div>
<div id="rbar">
  <div class="on"></div>
  <svg style="top:21px" viewBox="0 0 20 20" fill="#333"><path d="M8.700 4.500h6.800v1.300h-1.300v9.700h-1.300v-9.700h-1.700v9.700h-1.300v-5.200c-2.500 0-3.900-1.300-3.900-2.900s1.300-2.900 2.700-2.900z"/></svg>
  <svg style="top:60px" viewBox="0 0 20 20" fill="none" stroke="#444" stroke-width="1.200"><rect x="2.500" y="4.500" width="15" height="11"/><path d="M2.500 7h15" stroke-width="3"/><path d="M2.500 11.500h15M7.500 5v10.500M12.500 5v10.500"/></svg>
  <svg style="top:96.5px;opacity:.45" viewBox="0 0 20 20" fill="none" stroke="#444" stroke-width="1"><rect x="3.500" y="3.500" width="13" height="13"/><circle cx="7.500" cy="7.500" r="1.200"/><path d="M4 14.500l4-4 3 3 2-2 3 3"/></svg>
  <svg style="top:136px;opacity:.45" viewBox="0 0 20 20" fill="none" stroke="#444" stroke-width="1"><rect x="4.500" y="2.500" width="11" height="15"/><path d="M4.500 5.500h11" stroke-width="3"/><path d="M4.500 15.500h11"/></svg>
  <svg style="top:173px;opacity:.45" viewBox="0 0 20 20" fill="none" stroke="#444" stroke-width="1"><path d="M3.500 3.500h9v3M3.500 3.500v9h3"/><circle cx="12" cy="12" r="5"/></svg>
  <svg style="top:211px;opacity:.45" viewBox="0 0 20 20" fill="none" stroke="#444" stroke-width="1"><rect x="3.500" y="11.500" width="3" height="5"/><rect x="8.500" y="7.500" width="3" height="9"/><rect x="13.500" y="3.500" width="3" height="13"/></svg>
  <svg style="top:248.5px;opacity:.45" viewBox="0 0 20 20" fill="none" stroke="#444" stroke-width="1"><path d="M4 3.500h12M10 3.500v8M3 17c3-4 11-4 14 0M3 12c3 3 11 3 14 0"/></svg>
  <svg style="top:288px;opacity:.45" viewBox="0 0 20 20" fill="none" stroke="#444" stroke-width="1"><rect x="2.500" y="4.500" width="15" height="11"/><path d="M3 5l7 6 7-6M3 15l5-5M17 15l-5-5"/></svg>
  <svg style="top:325.5px" viewBox="0 0 20 20" fill="none" stroke="#fff" stroke-width="1.200"><rect x="2.500" y="4.500" width="15" height="11"/><path d="M5.500 7.500v5M4.500 7.500h2M4.500 12.500h2"/></svg>
</div>
<div id="status"><div class="sw">
  <div class="t" style="left:40.700px">Page 1 of 1</div>
  <div class="vs" style="left:106px"></div>
  <svg style="left:112px" viewBox="0 0 20 20" fill="none" stroke="#444" stroke-width="1"><path d="M4 4.5h12" stroke-width="2"/><path d="M4 8.5h12"/><text x="10" y="17" font-family="Liberation Sans,Arial,sans-serif" font-size="6.5" font-weight="bold" text-anchor="middle" fill="#444" stroke="none">123</text></svg>
  <div class="t" style="left:136.700px">Word count</div>
  <div class="vs" style="left:740px"></div>
  <div class="t" style="left:754.8px;word-spacing:1.5px;letter-spacing:-.1px">English (United States)<i class="car" style="margin-left:7px;top:-2.500px"></i></div>
  <svg style="left:893px" viewBox="0 0 20 20" fill="none" stroke="#333" stroke-width="1.3"><circle cx="10" cy="10" r="7"/><ellipse cx="10" cy="10" rx="3" ry="7" stroke-width="1"/><path d="M3 10h14" stroke-width="1"/></svg>
  <svg style="left:922.5px" viewBox="0 0 20 20" fill="none" stroke="#333" stroke-width="1.3"><text x="10" y="9.500" font-family="Liberation Sans,Arial,sans-serif" font-size="8" font-weight="bold" text-anchor="middle" fill="#333" stroke="none">abc</text><path d="M7 12l3 3 6-5.500"/></svg>
  <div class="vs" style="left:953.5px"></div>
  <svg style="left:960.5px" viewBox="0 0 20 20" fill="none" stroke="#333" stroke-width="1.3"><path d="M15.5 10v6.5h-12v-13h8"/><path d="M6 7.5h4M6 10.5h3M6 13.5h5"/><path d="M10 12l1-3 6-6 2 2-6 6z" fill="#f1f1f1"/></svg>
  <i class="car" style="position:absolute;left:982px;top:8px;margin:0"></i>
  <div class="vs" style="left:1000.5px"></div>
  <svg style="left:1012px" viewBox="0 0 20 20" fill="none" stroke="#333" stroke-width="1.4"><rect x="3.500" y="3.500" width="13" height="13" stroke-dasharray="4.500 4" stroke-dashoffset="2.200"/><path d="M6.500 9v-2.500h2.500M13.500 9v-2.500h-2.500M6.500 11v2.500h2.500M13.500 11v2.500h-2.500" stroke-width="1.200"/></svg>
  <svg style="left:1043px" viewBox="0 0 20 20" fill="none" stroke="#333" stroke-width="1.3"><path d="M2.5 4v12M17.5 4v12M5 10h10M7 7.5l-2.5 2.5 2.5 2.5M13 7.5l2.5 2.5-2.5 2.5"/></svg>
  <svg style="left:1073.5px" viewBox="0 0 20 20" fill="none" stroke="#444" stroke-width="1.200"><path d="M4 10h12"/></svg>
  <div class="t" style="left:1106.5px">Zoom 100%</div>
  <svg style="left:1180px" viewBox="0 0 20 20" fill="none" stroke="#444" stroke-width="1.200"><path d="M4 10h12M10 4v12"/></svg>
</div></div>
</div>
</body>
</html>
